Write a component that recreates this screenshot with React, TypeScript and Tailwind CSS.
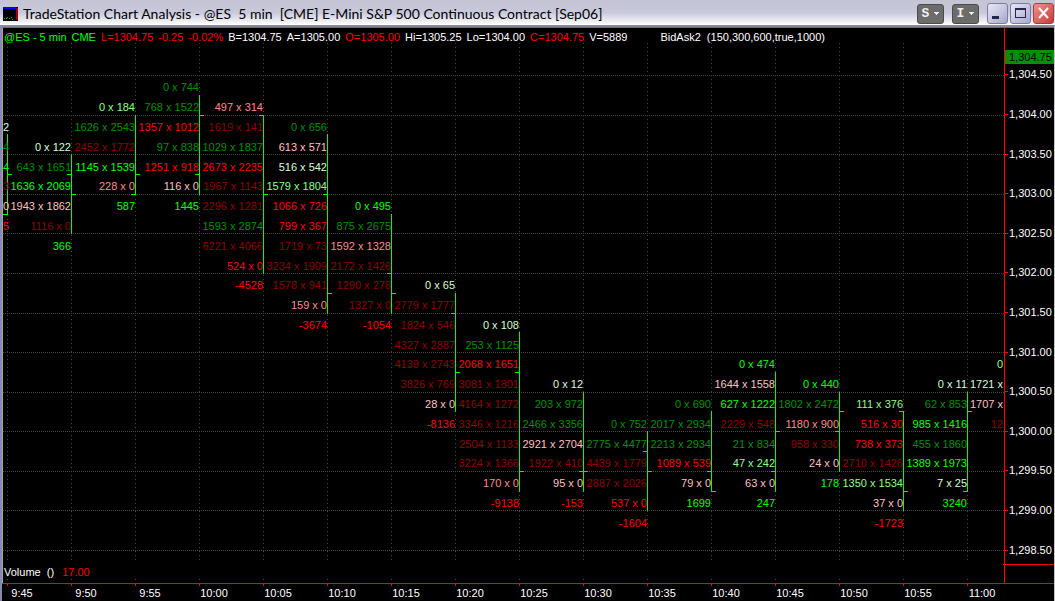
import React from "react";

const tone = {
  w: "text-[#d4ffd4]",
  lg: "text-[#8cff8c]",
  g: "text-[#00ff00]",
  dg: "text-[#009000]",
  dr: "text-[#900000]",
  r: "text-[#ff0000]",
  P: "text-[#ff8c8c]",
  p: "text-[#ffc0c0]",
};

type Tone = keyof typeof tone;
type Cell = [string, Tone];
interface Column {
  start: number;
  cells: Cell[];
}

/* Bid x ask volume per price level; `start` is the first occupied row. */
const columns: Column[] = [
  { start: 2, cells: [["2", "w"], ["4", "dg"], ["4", "g"], ["3", "dr"], ["0", "p"], ["5", "r"]] },
  { start: 3, cells: [["0 x 122", "w"], ["643 x 1651", "dg"], ["1636 x 2069", "g"], ["1943 x 1862", "p"], ["1116 x 0", "dr"], ["366", "g"]] },
  { start: 1, cells: [["0 x 184", "lg"], ["1626 x 2543", "dg"], ["2452 x 1772", "dr"], ["1145 x 1539", "g"], ["228 x 0", "P"], ["587", "g"]] },
  { start: 0, cells: [["0 x 744", "dg"], ["768 x 1522", "dg"], ["1357 x 1012", "r"], ["97 x 838", "dg"], ["1251 x 918", "r"], ["116 x 0", "p"], ["1445", "g"]] },
  { start: 1, cells: [["497 x 314", "P"], ["1619 x 141", "dr"], ["1029 x 1837", "dg"], ["2673 x 2235", "r"], ["1967 x 1143", "dr"], ["2296 x 1281", "dr"], ["1593 x 2874", "dg"], ["6221 x 4066", "dr"], ["524 x 0", "r"], ["-4528", "r"]] },
  { start: 2, cells: [["0 x 656", "dg"], ["613 x 571", "p"], ["516 x 542", "w"], ["1579 x 1804", "lg"], ["1066 x 726", "r"], ["799 x 367", "r"], ["1719 x 73", "dr"], ["3234 x 1909", "dr"], ["1578 x 941", "dr"], ["159 x 0", "P"], ["-3674", "r"]] },
  { start: 6, cells: [["0 x 495", "g"], ["875 x 2675", "dg"], ["1592 x 1328", "P"], ["2172 x 1426", "dr"], ["1290 x 278", "dr"], ["1327 x 0", "dr"], ["-1054", "r"]] },
  { start: 10, cells: [["0 x 65", "w"], ["2779 x 1777", "dr"], ["1824 x 546", "dr"], ["4327 x 2887", "dr"], ["4139 x 2743", "dr"], ["3826 x 769", "dr"], ["28 x 0", "p"], ["-8136", "r"]] },
  { start: 12, cells: [["0 x 108", "w"], ["253 x 1125", "dg"], ["2068 x 1651", "r"], ["3081 x 1801", "dr"], ["4164 x 1272", "dr"], ["3346 x 1216", "dr"], ["2504 x 1133", "dr"], ["3224 x 1366", "dr"], ["170 x 0", "P"], ["-9138", "r"]] },
  { start: 15, cells: [["0 x 12", "w"], ["203 x 972", "dg"], ["2466 x 3356", "dg"], ["2921 x 2704", "p"], ["1922 x 410", "dr"], ["95 x 0", "p"], ["-153", "r"]] },
  { start: 17, cells: [["0 x 752", "dg"], ["2775 x 4477", "dg"], ["4439 x 1779", "dr"], ["2887 x 2026", "dr"], ["537 x 0", "r"], ["-1604", "r"]] },
  { start: 16, cells: [["0 x 690", "dg"], ["2017 x 2934", "dg"], ["2213 x 2934", "dg"], ["1089 x 539", "r"], ["79 x 0", "p"], ["1699", "g"]] },
  { start: 14, cells: [["0 x 474", "g"], ["1644 x 1558", "p"], ["627 x 1222", "g"], ["2229 x 548", "dr"], ["21 x 834", "dg"], ["47 x 242", "lg"], ["63 x 0", "p"], ["247", "g"]] },
  { start: 15, cells: [["0 x 440", "g"], ["1802 x 2472", "dg"], ["1180 x 900", "P"], ["958 x 330", "dr"], ["24 x 0", "p"], ["178", "g"]] },
  { start: 16, cells: [["111 x 376", "lg"], ["516 x 30", "r"], ["738 x 373", "r"], ["2710 x 1426", "dr"], ["1350 x 1534", "lg"], ["37 x 0", "p"], ["-1723", "r"]] },
  { start: 15, cells: [["0 x 11", "w"], ["62 x 853", "dg"], ["985 x 1416", "g"], ["455 x 1860", "dg"], ["1389 x 1973", "g"], ["7 x 25", "w"], ["3240", "g"]] },
  { start: 14, cells: [["0", "lg"], ["1721 x", "w"], ["1707 x", "p"], ["12", "dr"]] },
];

/* high, low, open, close as quarter-point steps below 1,304.50 */
const bars = [
  [3, 7, 7, 5],
  [4, 8, 5, 6],
  [2, 6, 6, 5],
  [1, 6, 5, 2],
  [2, 10, 2, 6],
  [3, 12, 6, 11],
  [7, 12, 10, 11],
  [11, 17, 12, 15],
  [13, 21, 15, 20],
  [16, 21, 20, 20],
  [18, 22, 19, 20],
  [17, 21, 20, 21],
  [15, 21, 20, 18],
  [16, 20, 18, 17],
  [17, 22, 17, 21],
  [16, 21, 21, 17],
];

const prices = ["1,304.50", "1,304.00", "1,303.50", "1,303.00", "1,302.50", "1,302.00", "1,301.50", "1,301.00", "1,300.50", "1,300.00", "1,299.50", "1,299.00", "1,298.50"];
const times = ["9:45", "9:50", "9:55", "10:00", "10:05", "10:10", "10:15", "10:20", "10:25", "10:30", "10:35", "10:40", "10:45", "10:50", "10:55", "11:00"];

const quotes: [string, string][] = [
  ["L=1304.75", "text-[#ff0000]"],
  ["-0.25", "text-[#ff0000]"],
  ["-0.02%", "text-[#ff0000]"],
  ["B=1304.75", "text-white"],
  ["A=1305.00", "text-white"],
  ["O=1305.00", "text-[#ff0000]"],
  ["Hi=1305.25", "text-white"],
  ["Lo=1304.00", "text-white"],
  ["C=1304.75", "text-[#ff0000]"],
  ["V=5889", "text-white"],
];

const levelY = (n: number) => Math.round(47 + (n * 475) / 24);
const barX = (i: number) => 4 + i * 64;

function Drawing() {
  return (
    <svg className="absolute inset-0 h-full w-full" shapeRendering="crispEdges" aria-hidden="true">
      {times.map((t, i) => (
        <g key={t} stroke="#484848" strokeDasharray="1 3">
          <line x1={barX(i) + 0.5} x2={barX(i) + 0.5} y1="15" y2="533" />
          <line x1={barX(i) + 0.5} x2={barX(i) + 0.5} y1="551" y2="552" />
        </g>
      ))}
      {prices.map((p, i) => (
        <line key={p} x1="0" x2="100%" y1={levelY(i * 2) + 0.5} y2={levelY(i * 2) + 0.5} stroke="#484848" strokeDasharray="1 1" />
      ))}
      {bars.map(([high, low, open, close], i) => (
        <path
          key={i}
          fill="#00ff00"
          d={`M${barX(i)} ${levelY(high)}h1V${levelY(low) + 1}h-1zM${barX(i) - 4} ${levelY(open)}h4v1h-4zM${barX(i) + 1} ${levelY(close)}h4v1h-4z`}
        />
      ))}
    </svg>
  );
}

function Dropdown({ letter }: { letter: string }) {
  return (
    <button
      type="button"
      className="flex h-5 w-[27px] items-center justify-center gap-[5px] rounded-[3px] border border-[#4c4c4c] bg-[#6c6c6c] font-['Liberation_Mono',monospace] text-[13px] font-bold leading-none text-[#efefef]"
    >
      {letter}
      <svg width="5" height="3" viewBox="0 0 5 3" shapeRendering="crispEdges" aria-hidden="true">
        <path d="M0 0h5v1H4v1H3v1H2V2H1V1H0z" fill="currentColor" />
      </svg>
    </button>
  );
}

export default function App() {
  return (
    <main className="flex min-h-screen w-full flex-col overflow-hidden bg-black font-['Liberation_Sans',Arial,sans-serif] text-[11px] leading-none text-white">
      <header className="flex h-[25px] items-center bg-linear-to-b from-[#c4c4d4] via-[#c8c8dc] to-white pl-[3px] pr-px pt-[2px] text-black">
        <svg width="15" height="14" viewBox="0 0 15 14" shapeRendering="crispEdges" aria-hidden="true">
          <path d="M0 0h15v14H0z" fill="#000" />
          <path d="M0 0h13v2H0z" fill="#0000ff" />
          <path d="M13 1h2v12h-2z" fill="#a00000" />
          <path d="M1 11h1v1H1zM3 11h1v1H3zM4 10h1v1H4zM6 11h1v1H6zM8 10h1v1H8zM9 12h1v1H9z" fill="#00c000" />
        </svg>
        <h1 className="ml-[5px] min-w-0 flex-1 overflow-hidden whitespace-pre font-[Lato,sans-serif] text-sm leading-5">
          {"TradeStation Chart Analysis - @ES  5 min  [CME] E-Mini S&P 500 Continuous Contract [Sep06]"}
        </h1>
        <div className="flex items-center gap-2">
          <Dropdown letter="S" />
          <Dropdown letter="I" />
          <div className="flex gap-[2px]">
            <button type="button" aria-label="Minimize" className="h-[21px] w-[21px] rounded-[3px] border border-[#7c7ca0] bg-linear-to-br from-[#e8e8f8] to-[#a8a8cc]">
              <svg width="19" height="19" shapeRendering="crispEdges" aria-hidden="true">
                <path d="M4 12h7v3H4z" fill="#26264c" />
              </svg>
            </button>
            <button type="button" aria-label="Maximize" className="h-[21px] w-[21px] rounded-[3px] border border-[#7c7ca0] bg-linear-to-br from-[#e8e8f8] to-[#a8a8cc]">
              <svg width="19" height="19" shapeRendering="crispEdges" aria-hidden="true">
                <path d="M4 4h11v10H4zM5 6v7h9V6z" fill="#26264c" fillRule="evenodd" />
              </svg>
            </button>
            <button type="button" aria-label="Close" className="h-[21px] w-[21px] rounded-[3px] border border-[#a83c3c] bg-linear-to-br from-[#f09090] to-[#c83838]">
              <svg width="19" height="19" aria-hidden="true">
                <path d="M5 4l9 10M14 4l-9 10" stroke="#fff" strokeWidth="2" />
              </svg>
            </button>
          </div>
        </div>
      </header>

      <div className="flex flex-1 flex-col border-l-2 border-r border-t-2 border-l-[#8888b0] border-r-[#c8c8c8] border-t-[#8888a4]">
        <div className="flex flex-1 border-t border-t-[#6c6c54]">
          <section className="relative flex min-w-0 flex-1 flex-col overflow-hidden border-l border-[#a8a890]" aria-label="Chart">
            <Drawing />
            <div className="relative flex h-[18px] items-center gap-[5px] whitespace-pre pl-px">
              <span className="text-[#00ff00]">@ES - 5 min</span>
              <span className="text-[#00ff00]">CME</span>
              {quotes.map(([text, color]) => (
                <span key={text} className={color}>
                  {text}
                </span>
              ))}
              <span className="pl-7">{"BidAsk2  (150,300,600,true,1000)"}</span>
            </div>
            <div className="relative mt-8 flex h-[475px]">
              {columns.map((column, i) => (
                <div
                  key={i}
                  className={
                    "grid grid-rows-24 justify-items-end whitespace-nowrap " +
                    (i === 0 ? "w-1 shrink-0" : i === columns.length - 1 ? "min-w-0 flex-1 pr-px" : "w-16 shrink-0")
                  }
                >
                  {column.cells.map(([text, color], j) => (
                    <span key={j} className={`self-center ${tone[color]}`} style={{ gridRowStart: column.start + j + 1 }}>
                      {text}
                    </span>
                  ))}
                </div>
              ))}
            </div>
            <div className="relative mt-auto flex h-[22px] items-center gap-2 whitespace-pre pl-px">
              <span>{"Volume  ()"}</span>
              <span className="text-[#ff0000]">17.00</span>
            </div>
          </section>

          <aside className="relative flex w-[50px] shrink-0 flex-col border-l border-[#ff0000]" aria-label="Price axis">
            <div className="absolute left-0 right-0 top-[22px] flex h-[14px] items-center bg-[#009000] pl-1 text-black">1,304.75</div>
            <div className="mt-[27px] grid h-[515px] grid-rows-13">
              {prices.map((price) => (
                <div key={price} className="flex items-center">
                  <span className="mr-px h-px w-[3px] bg-[#ff0000]" />
                  {price}
                </div>
              ))}
            </div>
            <span className="absolute -left-2 right-0 top-[536px] ml-1.5 h-px bg-[#ff0000]" />
          </aside>
        </div>

        <footer className="flex h-[18px] border-t border-[#ff0000] pl-[5px]" aria-label="Time axis">
          {times.map((time, i) => (
            <div key={time} className={i === times.length - 1 ? "flex min-w-0 flex-1" : "flex w-16 shrink-0"}>
              <span className="h-[2px] w-px bg-[#ff0000]" />
              <span className="mt-1 w-7 text-center">{time}</span>
            </div>
          ))}
        </footer>
      </div>
    </main>
  );
}
